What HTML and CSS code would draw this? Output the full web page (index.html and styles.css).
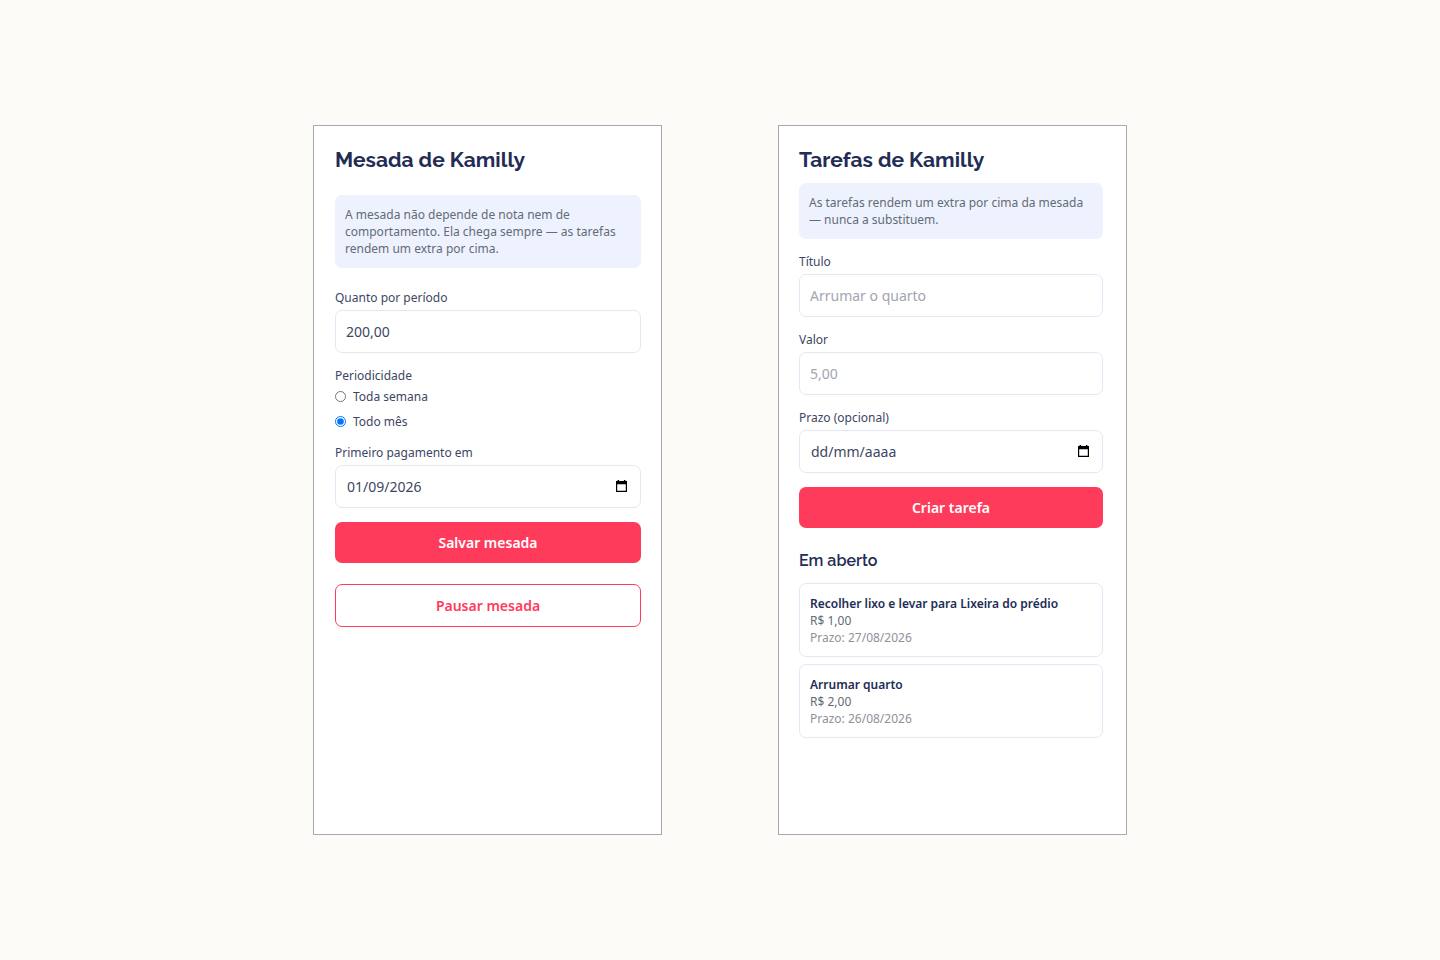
FILE: index.html
```
<!DOCTYPE html>
<html lang="pt-BR">
<head>
	<meta charset="UTF-8">
	<meta name="viewport" content="width=device-width, initial-scale=1">
	<title>Mesada e tarefas</title>
	<link rel="stylesheet" href="styles.css">
</head>
<body>
	<main class="screens">
		<!-- mesada -->
		<section class="screen">
			<h1 class="title">Mesada de Kamilly</h1>
			<form class="form form-mesada">
				<p class="note">A mesada não depende de nota nem de comportamento. Ela chega sempre — as tarefas rendem um extra por cima.</p>
				<div class="fields">
					<div class="field">
						<label for="quanto">Quanto por período</label>
						<input class="input" type="text" id="quanto" inputmode="decimal" value="200,00">
					</div>
					<fieldset class="field periodo">
						<legend>Periodicidade</legend>
						<label class="radio"><input type="radio" name="periodo" value="semana">Toda semana</label>
						<label class="radio"><input type="radio" name="periodo" value="mes" checked>Todo mês</label>
					</fieldset>
					<div class="field">
						<label for="primeiro">Primeiro pagamento em</label>
						<div class="input date">
							<input type="text" id="primeiro" inputmode="numeric" placeholder="dd/mm/aaaa" value="01/09/2026">
							<button type="button" class="calendar" aria-label="Abrir calendário">
								<svg viewBox="0 0 11 12"><path d="M0 1h1.6V0h1.5v1h4.8V0h1.5v1H11v11H0zM1.2 4.2v6.6h8.6V4.2z" fill-rule="evenodd"/></svg>
							</button>
						</div>
					</div>
					<button type="submit" class="btn">Salvar mesada</button>
				</div>
				<button type="button" class="btn btn-outline">Pausar mesada</button>
			</form>
		</section>

		<!-- tarefas -->
		<section class="screen screen-tarefas">
			<h1 class="title">Tarefas de Kamilly</h1>
			<form class="form fields">
				<p class="note">As tarefas rendem um extra por cima da mesada — nunca a substituem.</p>
				<div class="field">
					<label for="titulo">Título</label>
					<input class="input" type="text" id="titulo" placeholder="Arrumar o quarto">
				</div>
				<div class="field">
					<label for="valor">Valor</label>
					<input class="input" type="text" id="valor" inputmode="decimal" placeholder="5,00">
				</div>
				<div class="field">
					<label for="prazo">Prazo (opcional)</label>
					<div class="input date">
						<input type="text" id="prazo" inputmode="numeric" placeholder="dd/mm/aaaa">
						<button type="button" class="calendar" aria-label="Abrir calendário">
							<svg viewBox="0 0 11 12"><path d="M0 1h1.6V0h1.5v1h4.8V0h1.5v1H11v11H0zM1.2 4.2v6.6h8.6V4.2z" fill-rule="evenodd"/></svg>
						</button>
					</div>
				</div>
				<button type="submit" class="btn">Criar tarefa</button>
			</form>
			<h2 class="subtitle">Em aberto</h2>
			<ul class="tasks">
				<li class="task">
					<h3>Recolher lixo e levar para Lixeira do prédio</h3>
					<p>R$ 1,00</p>
					<p class="prazo">Prazo: 27/08/2026</p>
				</li>
				<li class="task">
					<h3>Arrumar quarto</h3>
					<p>R$ 2,00</p>
					<p class="prazo">Prazo: 26/08/2026</p>
				</li>
			</ul>
		</section>
	</main>
</body>
</html>
```
FILE: styles.css
```
*{
	margin: 0;
	padding: 0;
	box-sizing: border-box;
}
body{
	min-height: 100vh;
	display: flex;
	align-items: center;
	justify-content: center;
	background: #fdfbf7;
	color: #3d4663;
	font-family: "Noto Sans", "Open Sans", sans-serif;
	font-size: 12px;
	line-height: 17px;
}
input,button{
	font: inherit;
	color: inherit;
}
.screens{
	width: 100%;
	display: flex;
	flex-wrap: wrap;
	justify-content: center;
	gap: 40px 116px;
}
.screen{
	width: 100%;
	max-width: 349px;
	min-height: 74vh;
	padding: 20px 20px 20px 21px;
	background: #ffffff;
	border: 1px solid #aaa9b0;
}
.screen-tarefas{
	padding: 20px 23px 20px 20px;
}
.title,.subtitle{
	color: #222c54;
	font-family: Raleway, Lato, sans-serif;
}
.title{
	font-size: 21px;
	font-weight: 700;
	line-height: 28px;
	margin-bottom: 9px;
}
.subtitle{
	font-size: 16px;
	font-weight: 600;
	line-height: 24px;
	margin: 21px 0 10px;
}
.form,.fields{
	display: flex;
	flex-direction: column;
}
.fields{
	gap: 14px;
}
.form-mesada{
	gap: 21px;
	margin-top: 21px;
}
.note{
	padding: 11px 10px;
	background: #eef2ff;
	border-radius: 7px;
	color: #636b74;
}
.field{
	display: flex;
	flex-direction: column;
	gap: 4px;
	border: 0;
}
.input{
	width: 100%;
	height: 43px;
	padding: 0 10px;
	background: #ffffff;
	border: 1px solid #e5e8f4;
	border-radius: 7px;
	font-size: 14px;
}
.input::placeholder{
	color: #a1a5b1;
}
/* campo de data com o botão do calendário */
.date{
	display: flex;
	align-items: center;
	padding: 0 13px 0 11px;
}
.date input{
	flex: 1;
	min-width: 0;
	border: 0;
	outline: 0;
	background: transparent;
}
.date input::placeholder{
	color: #3d4663;
}
.date:focus-within{
	border-color: #ff3b5c;
}
.calendar{
	display: flex;
	background: none;
	border: 0;
	cursor: pointer;
}
.calendar svg{
	width: 11px;
	height: 12px;
	fill: #000000;
}
.periodo{
	display: block;
}
.radio{
	display: flex;
	align-items: center;
	gap: 7px;
	margin-top: 8px;
}
legend + .radio{
	margin-top: 4px;
}
.radio input{
	width: 11px;
	height: 11px;
}
.btn{
	padding: 12px;
	background: #ff3b5c;
	border: 0;
	border-radius: 7px;
	color: #ffffff;
	font-size: 14px;
	font-weight: 600;
	cursor: pointer;
}
.btn-outline{
	background: #ffffff;
	border: 1px solid #ff3b5c;
	color: #ff3b5c;
}
.tasks{
	display: flex;
	flex-direction: column;
	gap: 7px;
	list-style: none;
}
.task{
	padding: 11px 10px 10px;
	border: 1px solid #e5e8f4;
	border-radius: 7px;
	color: #636b74;
}
.task h3{
	color: #222c54;
	font-size: 12px;
	font-weight: 600;
}
.task .prazo{
	color: #8f9298;
}
```
